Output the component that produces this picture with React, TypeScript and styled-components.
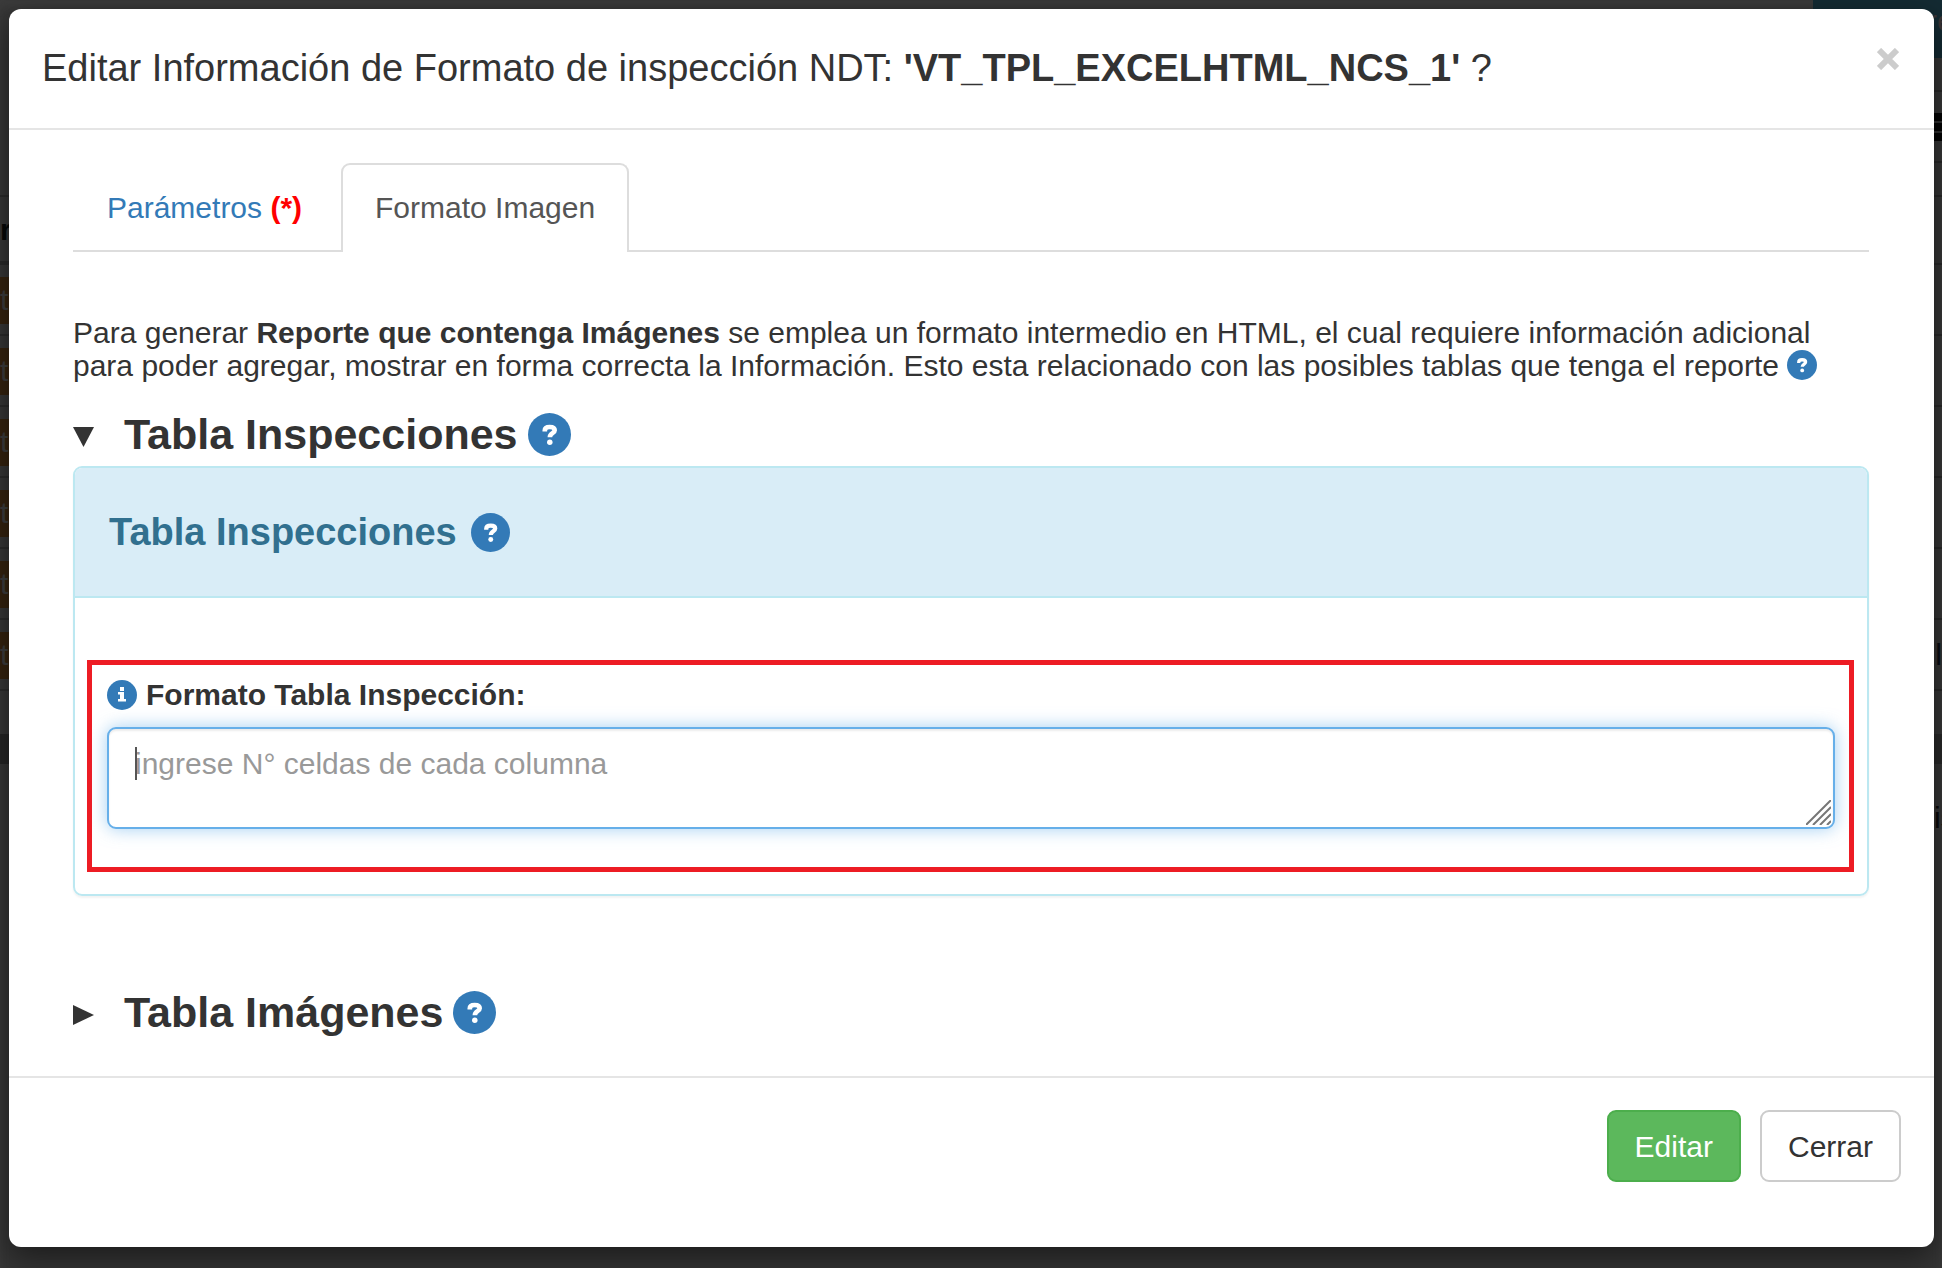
import React from "react";
import styled, { createGlobalStyle } from "styled-components";

const GlobalStyle = createGlobalStyle`
  *, *::before, *::after { box-sizing: border-box; }
  html { background: #3b3b3b; }
  body {
    margin: 0;
    color: #333;
    font: 30px/43px "Liberation Sans", Arial, sans-serif;
    overflow: hidden;
  }
`;

const Page = styled.div`
  position: relative;
  min-height: 100vh;
  overflow: hidden;
  background: #363636;
  box-shadow: inset 0 8px 8px #3c3c3c;
`;

const Backdrop = styled.div`
  position: absolute;
  inset: 0;
  display: flex;
  justify-content: space-between;
  overflow: hidden;
`;

const LeftEdge = styled.div`
  width: 40px;
  padding-top: 195px;
`;

const LeftHeading = styled.div`
  height: 70px;
  border-top: 2px solid #2b2b2b;
  border-bottom: 4px solid #2a2a2a;
  padding-top: 10px;
  color: #060808;
  font-weight: bold;
  line-height: 46px;
`;

const LeftRow = styled.div`
  height: 71px;
  padding-top: 12px;
  border-bottom: 2px solid #2b2b2b;
`;

const Tag = styled.div`
  height: 47px;
  background: #35230f;
  color: #3d3d3d;
  line-height: 45px;
`;

const LeftFooter = styled.div`
  height: 30px;
  margin-top: 43px;
  background: #262626;
`;

const RightEdge = styled.div`
  width: 129px;
`;

const TealBlock = styled.div`
  height: 58px;
  padding-left: 114px;
  background: #142b33;
  color: #3b3536;
  line-height: 42px;
  white-space: nowrap;
  overflow: hidden;
`;

const RightRow = styled.div<{ $height: number }>`
  display: flex;
  align-items: center;
  justify-content: flex-end;
  height: ${(p) => p.$height}px;
  border-bottom: 2px solid #292929;
  color: #080c12;
`;

const RightBand = styled.div`
  height: 30px;
  margin: 43px 0 32px;
  background: #2a2a2a;
`;

const RightNote = styled.div`
  padding-left: 121px;
  color: #080808;
  white-space: nowrap;
`;

const MenuBars = styled.div`
  width: 100%;
  height: 28px;
  background: repeating-linear-gradient(#050505 0 8px, #303030 8px 10px);
`;

const Modal = styled.section`
  position: relative;
  margin: 9px 8px 21px 9px;
  border-radius: 12px;
  background: #fff;
  box-shadow: 0 11px 32px rgba(0, 0, 0, 0.5);
`;

const Header = styled.header`
  display: flex;
  justify-content: space-between;
  align-items: flex-start;
  padding: 32px 33px;
  border-bottom: 2px solid #e5e5e5;
`;

const Title = styled.h4`
  margin: 0;
  font-size: 38px;
  font-weight: 400;
  line-height: 55px;
`;

const CloseButton = styled.button`
  display: grid;
  place-items: center;
  width: 26px;
  height: 36px;
  padding: 0;
  border: 0;
  background: none;
  color: #ccc;
`;

const Body = styled.div`
  padding: 33px 65px 40px 64px;
`;

const Tabs = styled.nav`
  display: flex;
  gap: 5px;
  height: 89px;
  border-bottom: 2px solid #ddd;
`;

const Tab = styled.a<{ $active?: boolean }>`
  height: ${(p) => (p.$active ? 89 : 87)}px;
  padding: 21px 32px;
  border: 2px solid ${(p) => (p.$active ? "#ddd" : "transparent")};
  border-bottom: 0;
  border-radius: 9px 9px 0 0;
  background: ${(p) => (p.$active ? "#fff" : "transparent")};
  color: ${(p) => (p.$active ? "#555" : "#337ab7")};
  text-decoration: none;
  white-space: nowrap;
`;

const Required = styled.b`
  color: #f00;
`;

const Intro = styled.p`
  margin: 64px 0 28px;
  line-height: 33px;
`;

const Icon = styled.svg<{ $size: number }>`
  width: ${(p) => p.$size}px;
  height: ${(p) => p.$size}px;
  flex: none;
  vertical-align: -4px;
  color: #337ab7;
`;

const SectionToggle = styled.button`
  display: flex;
  align-items: center;
  height: 48px;
  padding: 0;
  border: 0;
  background: none;
  color: #333;
  font: bold 43px/48px "Liberation Sans", Arial, sans-serif;
`;

const Arrow = styled.svg`
  width: 22px;
  height: 26px;
  margin-right: 29px;
`;

const ToggleLabel = styled.span`
  margin-right: 10px;
`;

const Panel = styled.section`
  margin: 8px 0 92px;
  border: 2px solid #bce8f1;
  border-radius: 9px;
  box-shadow: 0 2px 2px rgba(0, 0, 0, 0.05);
`;

const PanelHeading = styled.div`
  display: flex;
  align-items: center;
  gap: 14px;
  height: 130px;
  padding: 0 34px;
  border-bottom: 2px solid #bce8f1;
  border-radius: 7px 7px 0 0;
  background: #d9edf7;
  color: #31708f;
`;

const PanelTitle = styled.h3`
  margin: 0;
  font-size: 38px;
  line-height: 43px;
`;

const PanelBody = styled.div`
  padding: 62px 13px 22px 12px;
`;

const Highlight = styled.div`
  padding: 8px 14px 38px 15px;
  border: 5px solid #ed1c24;
`;

const FieldLabel = styled.label`
  display: flex;
  align-items: center;
  gap: 9px;
  margin-bottom: 11px;
  font-weight: bold;
`;

const FieldWrap = styled.div`
  position: relative;
`;

const Field = styled.textarea`
  display: block;
  width: 100%;
  height: 102px;
  padding: 13px 26px;
  border: 2px solid #66afe9;
  border-radius: 9px;
  outline: 0;
  box-shadow: inset 0 2px 2px rgba(0, 0, 0, 0.075), 0 0 17px rgba(102, 175, 233, 0.6);
  color: #555;
  font: 30px/43px "Liberation Sans", Arial, sans-serif;
  resize: none;
  &::placeholder { color: #999; }
`;

const Grip = styled.svg`
  position: absolute;
  right: 4px;
  bottom: 4px;
  width: 25px;
  height: 25px;
  pointer-events: none;
`;

const Caret = styled.span`
  position: absolute;
  top: 20px;
  left: 28px;
  width: 2px;
  height: 33px;
  background: #555;
`;

const Footer = styled.footer`
  display: flex;
  justify-content: flex-end;
  gap: 19px;
  padding: 32px 33px 65px;
  border-top: 2px solid #e5e5e5;
`;

const Button = styled.button<{ $primary?: boolean }>`
  height: 72px;
  padding: 0 26px;
  border: 2px solid ${(p) => (p.$primary ? "#4cae4c" : "#ccc")};
  border-radius: 9px;
  background: ${(p) => (p.$primary ? "#5cb85c" : "#fff")};
  color: ${(p) => (p.$primary ? "#fff" : "#333")};
  font: 30px/43px "Liberation Sans", Arial, sans-serif;
`;

const HelpIcon = ({ size }: { size: number }) => (
  <Icon $size={size} viewBox="0 0 44 44" aria-hidden="true">
    <circle cx="22" cy="22" r="22" fill="currentColor" />
    <path
      d="M17.2 19v-1.200c0-2.300 1.600-3.500 5-3.500s5.100 1.200 5.100 3.300c0 3.300-4.900 2.700-4.900 7.100"
      fill="none"
      stroke="#fff"
      strokeWidth="4.800"
    />
    <circle cx="22.300" cy="30" r="2.800" fill="#fff" />
  </Icon>
);

const InfoIcon = () => (
  <Icon $size={30} viewBox="0 0 30 30" aria-hidden="true">
    <circle cx="15" cy="15" r="15" fill="currentColor" />
    <path d="M13 7h4v4h-4zM11 12h6v7h2v2.500h-8v-2.500h2v-4.500h-2z" fill="#fff" />
  </Icon>
);

export default function App() {
  return (
    <>
      <GlobalStyle />
      <Page>
        <Backdrop aria-hidden="true">
          <LeftEdge>
            <LeftHeading>r</LeftHeading>
            {[0, 1, 2, 3, 4, 5].map((i) => (
              <LeftRow key={i}><Tag>t</Tag></LeftRow>
            ))}
            <LeftFooter />
          </LeftEdge>
          <RightEdge>
            <TealBlock>re</TealBlock>
            <RightRow $height={34} />
            <RightRow $height={71}><MenuBars /></RightRow>
            <RightRow $height={34} />
            <RightRow $height={68} />
            {[0, 1, 2, 3, 4].map((i) => <RightRow key={i} $height={71} />)}
            <RightRow $height={71}>l</RightRow>
            <RightBand />
            <RightNote>is</RightNote>
          </RightEdge>
        </Backdrop>
        <Modal role="dialog" aria-labelledby="dialog-title">
          <Header>
            <Title id="dialog-title">
              Editar Información de Formato de inspección NDT: <b>'VT_TPL_EXCELHTML_NCS_1'</b> ?
            </Title>
            <CloseButton type="button" aria-label="Cerrar ventana">
              <svg width="22" height="22" viewBox="0 0 22 22" aria-hidden="true">
                <path d="M2 2l18 18M20 2L2 20" stroke="currentColor" strokeWidth="6" />
              </svg>
            </CloseButton>
          </Header>
          <Body>
            <Tabs>
              <Tab href="#parametros">Parámetros <Required>(*)</Required></Tab>
              <Tab href="#formato" $active>Formato Imagen</Tab>
            </Tabs>
            <Intro>
              Para generar <b>Reporte que contenga Imágenes</b> se emplea un formato intermedio en HTML, el cual
              requiere información adicional para poder agregar, mostrar en forma correcta la Información. Esto esta
              relacionado con las posibles tablas que tenga el reporte <HelpIcon size={30} />
            </Intro>
            <SectionToggle type="button" aria-expanded="true">
              <Arrow viewBox="0 0 22 26" aria-hidden="true"><path d="M0 6h21L10.500 26z" fill="currentColor" /></Arrow>
              <ToggleLabel>Tabla Inspecciones</ToggleLabel>
              <HelpIcon size={43} />
            </SectionToggle>
            <Panel>
              <PanelHeading>
                <PanelTitle>Tabla Inspecciones</PanelTitle>
                <HelpIcon size={39} />
              </PanelHeading>
              <PanelBody>
                <Highlight>
                  <FieldLabel htmlFor="formato-tabla"><InfoIcon />Formato Tabla Inspección:</FieldLabel>
                  <FieldWrap>
                    <Field id="formato-tabla" placeholder="ingrese N° celdas de cada columna" />
                    <Caret />
                    <Grip viewBox="0 0 25 25" aria-hidden="true">
                      <path d="M0 25L25 0M7 25L25 7M14 25L25 14M21 25L25 21" stroke="#777" strokeWidth="2" />
                    </Grip>
                  </FieldWrap>
                </Highlight>
              </PanelBody>
            </Panel>
            <SectionToggle type="button" aria-expanded="false">
              <Arrow viewBox="0 0 22 26" aria-hidden="true"><path d="M0 6L21 16L0 26z" fill="currentColor" /></Arrow>
              <ToggleLabel>Tabla Imágenes</ToggleLabel>
              <HelpIcon size={43} />
            </SectionToggle>
          </Body>
          <Footer>
            <Button type="button" $primary>Editar</Button>
            <Button type="button">Cerrar</Button>
          </Footer>
        </Modal>
      </Page>
    </>
  );
}
